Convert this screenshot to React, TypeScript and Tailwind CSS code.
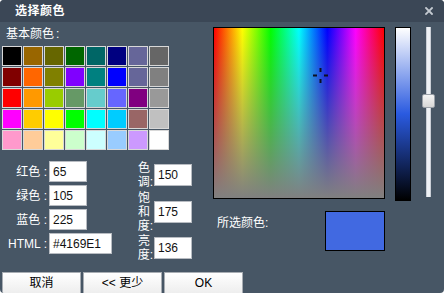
import React from "react";

const swatches = [
  ["#000000", "#996600", "#666600", "#006600", "#006666", "#000080", "#666699", "#666666"],
  ["#800000", "#FF6600", "#808000", "#8000FF", "#008080", "#0000FF", "#666699", "#808080"],
  ["#FF0000", "#FF9900", "#99CC00", "#669966", "#66CCCC", "#6666FF", "#800080", "#999999"],
  ["#FF00FF", "#FFCC00", "#FFFF00", "#00FF00", "#00FFFF", "#00CCFF", "#996666", "#C0C0C0"],
  ["#FF99CC", "#FFCC99", "#FFFF99", "#CCFFCC", "#CCFFFF", "#99CCFF", "#CC99FF", "#FFFFFF"],
];

const font = "font-['Liberation_Sans','Noto_Sans_CJK_SC',sans-serif]";

function Field({ value, w = "w-[38px]", h = "h-[21px]" }: { value: string; w?: string; h?: string }) {
  return (
    <div className={`${w} ${h} bg-white border border-[#b8bcc2] flex items-center pl-[3px] text-[12px] text-[#111]`}>
      {value}
    </div>
  );
}

function Stack({ lines, lh }: { lines: string[]; lh: string }) {
  return (
    <div className={`w-[20px] flex flex-col items-end ${lh}`}>
      {lines.map((l, i) => (
        <div key={i} className={i < lines.length - 1 ? "pr-[3px]" : ""}>
          {l}
        </div>
      ))}
    </div>
  );
}

export default function App() {
  return (
    <div className="w-[444px] h-[293px] overflow-hidden bg-white">
      <div className={`w-[444px] h-[293px] bg-[#475665] rounded-[4px] flex flex-col overflow-hidden ${font}`}>
        {/* Title bar */}
        <div className="h-[22px] bg-[#3b4756] flex items-center justify-between pl-[15px] pr-[11px] shrink-0">
          <span className="text-white font-bold text-[12px] leading-none tracking-[0.5px]">选择颜色</span>
          <svg width="8" height="8" viewBox="0 0 8 8">
            <path d="M1 1 L7 7 M7 1 L1 7" stroke="#c4cad1" strokeWidth="1.8" strokeLinecap="square" />
          </svg>
        </div>

        {/* Body */}
        <div className="h-[250px] flex shrink-0">
          {/* Left panel */}
          <div className="w-[213px] pl-[2px] flex flex-col">
            <div className="h-[24px] pl-[4px] flex items-center text-white text-[12px] leading-none">
              基本颜色<span className="ml-[2px]">:</span>
            </div>
            <div className="grid grid-cols-[repeat(8,20px)] gap-px w-max">
              {swatches.flat().map((c, i) => (
                <div key={i} className="w-[20px] h-[20px] border border-[#d8d8d8]" style={{ backgroundColor: c }} />
              ))}
            </div>

            <div className="mt-[11px] flex text-white text-[12px]">
              {/* RGB column */}
              <div className="flex flex-col gap-[3px]">
                {[
                  ["红色 :", "65"],
                  ["绿色 :", "105"],
                  ["蓝色 :", "225"],
                ].map(([l, v]) => (
                  <div key={l} className="flex items-center h-[21px]">
                    <div className="w-[47px] text-right pr-[2px] leading-none">{l}</div>
                    <Field value={v} />
                  </div>
                ))}
                <div className="flex items-center h-[21px]">
                  <div className="w-[47px] text-right pr-[2px] leading-none">HTML :</div>
                  <Field value="#4169E1" w="w-[63px]" />
                </div>
              </div>

              {/* HSL column */}
              <div className="ml-[21px] flex flex-col gap-[2px]">
                <div className="flex items-center h-[28px]">
                  <Stack lines={["色", "调:"]} lh="leading-[14px]" />
                  <div className="ml-[1px]">
                    <Field value="150" h="h-[22px]" />
                  </div>
                </div>
                <div className="flex items-center h-[41px]">
                  <Stack lines={["饱", "和", "度:"]} lh="leading-[14px]" />
                  <div className="ml-[1px]">
                    <Field value="175" h="h-[22px]" />
                  </div>
                </div>
                <div className="flex items-center h-[28px]">
                  <Stack lines={["亮", "度:"]} lh="leading-[14px]" />
                  <div className="ml-[1px]">
                    <Field value="136" h="h-[22px]" />
                  </div>
                </div>
              </div>
            </div>
          </div>

          {/* Right panel */}
          <div className="pt-[5px] flex flex-col">
            <div className="flex items-start">
              <div className="relative w-[172px] h-[172px] border border-black bg-[linear-gradient(to_right,#ff0000,#ffff00,#00ff00,#00ffff,#0000ff,#ff00ff,#ff0000)]">
                <div className="absolute inset-0 bg-[linear-gradient(to_bottom,rgba(128,128,128,0),#808080)]" />
                <svg className="absolute left-[98px] top-[39px]" width="17" height="17" viewBox="0 0 17 17">
                  <path d="M8.5 1 V5 M8.5 12 V16 M1 8.5 H5 M12 8.5 H16" stroke="#0c1020" strokeWidth="2" />
                </svg>
              </div>
              <div className="ml-[10px] w-[16px] h-[174px] border border-black bg-[linear-gradient(to_bottom,#ffffff,#2a5ae0,#000000)]" />
              <div className="relative ml-[11px] w-[13px] h-[170px] flex justify-center">
                <div className="w-[5px] h-[170px] bg-[#eef1f5] border-x border-[#c9ced6]" />
                <div className="absolute left-0 top-[67px] w-[13px] h-[14px] rounded-[2px] border border-[#9aa0a8] bg-[linear-gradient(to_bottom,#f4f4f4,#d6d6d6)]" />
              </div>
            </div>
            <div className="mt-[10px] w-[172px] flex justify-between items-start">
              <span className="pl-[4px] pt-[5px] text-white text-[12px] leading-[14px]">所选颜色:</span>
              <div className="w-[60px] h-[40px] bg-[#4169E1] border border-black" />
            </div>
          </div>
        </div>

        {/* Buttons */}
        <div className="flex gap-[2px] pl-[2px] h-[24px] shrink-0">
          {["取消", "<< 更少", "OK"].map((t) => (
            <div
              key={t}
              className="w-[79px] h-[24px] border border-[#a8adb3] bg-[linear-gradient(to_bottom,#ffffff,#ececec)] flex items-start justify-center pt-[3px] text-[12px] text-black leading-[14px]"
            >
              {t}
            </div>
          ))}
        </div>
      </div>
    </div>
  );
}
